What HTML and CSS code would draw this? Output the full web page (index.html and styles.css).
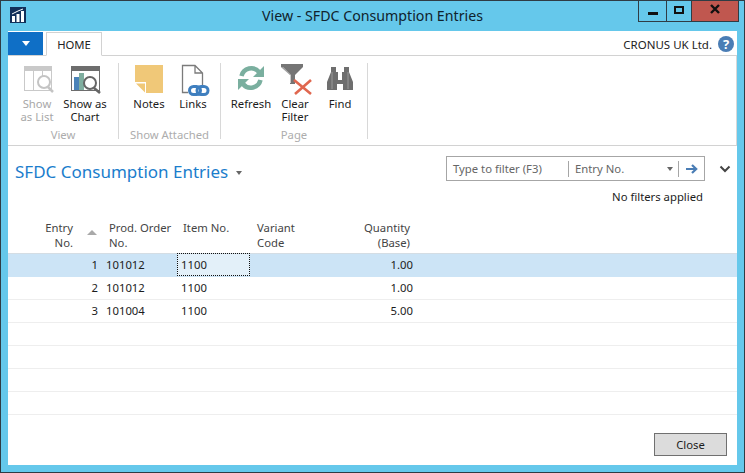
FILE: index.html
```html
<!DOCTYPE html>
<html lang="en">
<head>
    <meta charset="UTF-8">
    <title>View - SFDC Consumption Entries</title>
    <link rel="stylesheet" href="styles.css">
</head>
<body>

    <div class="window">
        <div class="titlebar">
            <div class="app-icon">
                <svg width="16" height="16" viewBox="0 0 16 16">
                    <rect width="16" height="16" fill="#12305a"/>
                    <path d="M2 9h3v6H2zM6.500 7h3v8h-3zM11 4h3v11h-3z" fill="#fff"/>
                    <path d="M2 7l6-3 5-2" stroke="#fff" stroke-width="1" fill="none"/>
                </svg>
            </div>
            <div class="window-title">View - SFDC Consumption Entries</div>
            <div class="window-controls">
                <div class="ctl ctl-min"><span class="min-glyph"></span></div>
                <div class="ctl ctl-max"><span class="max-glyph"></span></div>
                <div class="ctl ctl-close">
                    <svg width="10" height="10" viewBox="0 0 10 10"><path d="M1 1l8 8M9 1l-8 8" stroke="#111" stroke-width="2.400"/></svg>
                </div>
            </div>
        </div>

        <div class="content">
            <div class="tabbar">
                <div class="file-btn"><span class="file-arrow"></span></div>
                <div class="tab">HOME</div>
                <div class="company">CRONUS UK Ltd.</div>
                <div class="help">?</div>
            </div>

            <div class="ribbon">
                <div class="group group-view">
                    <div class="group-btns">
                        <div class="rbtn rbtn-list disabled">
                            <svg width="32" height="32" viewBox="0 0 32 32">
                                <rect x="3.500" y="3.500" width="27" height="24" fill="#fff" stroke="#c9c9c9"/>
                                <rect x="3" y="3" width="28" height="5" fill="#c9c9c9"/>
                                <path d="M12.500 8v20M21.500 8v10" stroke="#c9c9c9"/>
                                <circle cx="23" cy="19" r="6" fill="#fff" stroke="#c4c4c4" stroke-width="2"/>
                                <path d="M27 24l5 5" stroke="#c4c4c4" stroke-width="2.500"/>
                            </svg>
                            <span>Show<br>as List</span>
                        </div>
                        <div class="rbtn rbtn-chart">
                            <svg width="32" height="32" viewBox="0 0 32 32">
                                <rect x="2.500" y="3.500" width="28" height="24" fill="#fff" stroke="#6d6d6d"/>
                                <rect x="2" y="3" width="29" height="5" fill="#6d6d6d"/>
                                <rect x="5" y="14" width="5" height="13" fill="#4b83b8"/>
                                <rect x="10" y="10" width="5" height="17" fill="#7fae9f"/>
                                <circle cx="21" cy="20" r="6" fill="#fff" stroke="#666" stroke-width="2"/>
                                <path d="M25 25l6 5" stroke="#666" stroke-width="2.500"/>
                            </svg>
                            <span>Show as<br>Chart</span>
                        </div>
                    </div>
                    <div class="group-label">View</div>
                </div>

                <div class="group group-attached">
                    <div class="group-btns">
                        <div class="rbtn rbtn-notes">
                            <svg width="32" height="32" viewBox="0 0 32 32">
                                <path d="M2 2h28v28H13V19H2z" fill="#f0c878"/>
                                <path d="M3 20.500h9v9z" fill="#f0c878"/>
                            </svg>
                            <span>Notes</span>
                        </div>
                        <div class="rbtn rbtn-links">
                            <svg width="32" height="32" viewBox="0 0 32 32">
                                <path d="M11 29.500H5.500v-27H18l7.500 7.500v14M18 2.500V10h7.500" fill="none" stroke="#7b7b7b" stroke-width="1.300"/>
                                <rect x="12.500" y="23.500" width="11" height="8" rx="4" fill="none" stroke="#3f7fbf" stroke-width="3"/>
                                <rect x="20" y="23.500" width="11" height="8" rx="4" fill="none" stroke="#3f7fbf" stroke-width="3"/>
                            </svg>
                            <span>Links</span>
                        </div>
                    </div>
                    <div class="group-label">Show Attached</div>
                </div>

                <div class="group group-page">
                    <div class="group-btns">
                        <div class="rbtn rbtn-refresh">
                            <svg width="32" height="32" viewBox="0 0 32 32">
                                <path d="M6.500 13A10 10 0 0 1 24 9" fill="none" stroke="#7aaf9f" stroke-width="4.500"/>
                                <path d="M29 3v11H18z" fill="#7aaf9f"/>
                                <path d="M25.500 17A10 10 0 0 1 8 21" fill="none" stroke="#7aaf9f" stroke-width="4.500"/>
                                <path d="M3 27V16h11z" fill="#7aaf9f"/>
                            </svg>
                            <span>Refresh</span>
                        </div>
                        <div class="rbtn rbtn-clear">
                            <svg width="32" height="32" viewBox="0 0 32 32">
                                <path d="M2 1h22v3l-8 8v9h-5v-9L2 4z" fill="#757575"/>
                                <path d="M4 4l8 8v8h-1v-8L3 4z" fill="#c9c9c9"/>
                                <path d="M15 17l17 14M32 17L16 31" stroke="#e0674f" stroke-width="2.600"/>
                            </svg>
                            <span>Clear<br>Filter</span>
                        </div>
                        <div class="rbtn rbtn-find">
                            <svg width="32" height="32" viewBox="0 0 32 32">
                                <path d="M7 4h5v5h2v8h4V9h2V4h5v5l4 10v8H19v-6h-6v6H3v-8L7 9z" fill="#6e6e6e"/>
                                <path d="M8 9v17M24 9v17" stroke="#999" stroke-width="1"/>
                            </svg>
                            <span>Find</span>
                        </div>
                    </div>
                    <div class="group-label">Page</div>
                </div>
            </div>

            <div class="page-head">
                <div class="page-title">SFDC Consumption Entries <span class="title-arrow"></span></div>
                <div class="filter-area">
                    <div class="filter-row">
                        <div class="filter-box">
                            <div class="filter-input">Type to filter (F3)</div>
                            <div class="filter-field">Entry No. <span class="field-arrow"></span></div>
                            <div class="filter-go">
                                <svg width="12" height="10" viewBox="0 0 12 10"><path d="M0 5h10M6 1l4.200 4L6 9" fill="none" stroke="#4a7db5" stroke-width="2.200"/></svg>
                            </div>
                        </div>
                        <div class="chevron">
                            <svg width="12" height="8" viewBox="0 0 12 8"><path d="M1.500 1.500L6 6l4.500-4.500" fill="none" stroke="#444" stroke-width="2"/></svg>
                        </div>
                    </div>
                    <div class="filter-status">No filters applied</div>
                </div>
            </div>

            <table class="grid">
                <colgroup>
                    <col class="c-entry"><col class="c-order"><col class="c-item"><col class="c-variant"><col class="c-qty"><col>
                </colgroup>
                <thead>
                    <tr>
                        <th class="num entry-head">Entry<br>No.<span class="sort-arrow"></span></th>
                        <th>Prod. Order<br>No.</th>
                        <th>Item No.</th>
                        <th>Variant<br>Code</th>
                        <th class="num">Quantity<br>(Base)</th>
                        <th></th>
                    </tr>
                </thead>
                <tbody>
                    <tr class="selected"><td class="num">1</td><td>101012</td><td class="focus">1100</td><td></td><td class="num">1.00</td><td></td></tr>
                    <tr><td class="num">2</td><td>101012</td><td>1100</td><td></td><td class="num">1.00</td><td></td></tr>
                    <tr><td class="num">3</td><td>101004</td><td>1100</td><td></td><td class="num">5.00</td><td></td></tr>
                    <tr><td></td><td></td><td></td><td></td><td></td><td></td></tr>
                    <tr><td></td><td></td><td></td><td></td><td></td><td></td></tr>
                    <tr><td></td><td></td><td></td><td></td><td></td><td></td></tr>
                    <tr><td></td><td></td><td></td><td></td><td></td><td></td></tr>
                </tbody>
            </table>

            <div class="footer">
                <button class="close-btn">Close</button>
            </div>
        </div>
    </div>

</body>
</html>
```

FILE: styles.css
```css
* {
    box-sizing: border-box;
}

html, body {
    margin: 0;
    height: 100%;
    overflow: hidden;
}

body {
    font-family: "Noto Sans", "Open Sans", sans-serif;
    font-size: 11.3px;
    color: #1c1c1c;
}

.window {
    width: 745px;
    height: 473px;
    background-color: #65c8eb;
    border: 1px solid #2f3c44;
    padding: 0 7px 7px;
    display: flex;
    flex-direction: column;
}

/* title bar */
.titlebar {
    height: 30px;
    flex: none;
    display: grid;
    grid-template-columns: 1fr auto 1fr;
    align-items: start;
}

.app-icon {
    margin: 6px 0 0 2px;
    height: 16px;
}

.window-title {
    font-size: 14.2px;
    line-height: 30px;
    color: #10222c;
}

.window-controls {
    justify-self: end;
    display: flex;
    height: 21px;
    margin-right: -2px;
    border: 1px solid #2f3c44;
    border-top: none;
}

.ctl {
    height: 100%;
    display: flex;
    align-items: center;
    justify-content: center;
}

.ctl-min {
    width: 28px;
    border-right: 1px solid #2f3c44;
}

.ctl-max {
    width: 25px;
    border-right: 1px solid #2f3c44;
}

.ctl-close {
    width: 46px;
    background-color: #c0574f;
}

.min-glyph {
    width: 10px;
    height: 3px;
    margin-top: 5px;
    background-color: #111;
}

.max-glyph {
    width: 10px;
    height: 8px;
    margin-top: -3px;
    border: 2px solid #111;
}

.ctl-close svg {
    margin-top: -4px;
}

/* main white area */
.content {
    flex: 1;
    background-color: #fff;
    display: flex;
    flex-direction: column;
    min-height: 0;
}

.tabbar {
    height: 25px;
    flex: none;
    display: flex;
    align-items: flex-end;
    border-bottom: 1px solid #d2d2d2;
}

.file-btn {
    width: 35px;
    height: 23px;
    background-color: #0f6fc6;
    display: flex;
    align-items: center;
    justify-content: center;
    align-self: flex-start;
    margin-top: 1px;
}

.file-arrow {
    border-left: 4.500px solid transparent;
    border-right: 4.500px solid transparent;
    border-top: 5px solid #fff;
}

.tab {
    width: 56px;
    height: 24px;
    margin-left: 3px;
    margin-bottom: -1px;
    border: 1px solid #d2d2d2;
    border-bottom: 1px solid #fff;
    text-align: center;
    line-height: 24px;
    color: #222;
}

.company {
    margin-left: auto;
    align-self: center;
    margin-top: 3px;
    font-size: 11.5px;
    color: #222;
}

.help {
    width: 16px;
    height: 16px;
    border-radius: 50%;
    background-color: #4a7db5;
    color: #fff;
    font-weight: bold;
    font-size: 13px;
    line-height: 16px;
    text-align: center;
    margin: 0 3px 0 6px;
    align-self: center;
    position: relative;
    top: 1px;
}

/* ribbon */
.ribbon {
    height: 90px;
    flex: none;
    display: flex;
    border-bottom: 1px solid #d2d2d2;
    border-right: 1px solid #d8d8d8;
    padding-top: 7px;
}

.group {
    display: flex;
    flex-direction: column;
    align-items: center;
    height: 76px;
    border-right: 1px solid #d8d8d8;
}

.group-view {
    width: 111px;
}

.group-attached {
    width: 102px;
}

.group-page {
    width: 147px;
}

.group-btns {
    display: flex;
    flex: 1;
    align-self: flex-start;
    margin-left: 8px;
}

.group-view .group-btns {
    margin-left: 6px;
}

.rbtn {
    width: 44px;
    display: flex;
    flex-direction: column;
    align-items: center;
    text-align: center;
    line-height: 13px;
    white-space: nowrap;
}

.rbtn svg {
    display: block;
    overflow: visible;
    margin-bottom: 2px;
    flex: none;
}

.rbtn-list {
    width: 46px;
}

.rbtn-chart {
    width: 50px;
}

.rbtn-find {
    width: 46px;
}

.disabled {
    color: #a8a8a8;
}

.group-label {
    color: #adadad;
    line-height: 13px;
    margin-bottom: -2px;
}

/* heading and filter */
.page-head {
    height: 74px;
    flex: none;
    display: flex;
    justify-content: space-between;
}

.page-title {
    margin: 14px 0 0 7px;
    font-size: 17px;
    line-height: 24px;
    color: #1a7dcc;
}

.title-arrow {
    display: inline-block;
    margin: 0 0 3px 3px;
    border-left: 3.500px solid transparent;
    border-right: 3.500px solid transparent;
    border-top: 4px solid #666;
}

.filter-area {
    margin-top: 10px;
    margin-right: 6px;
}

.filter-row {
    display: flex;
    align-items: center;
}

.filter-box {
    width: 259px;
    height: 25px;
    border: 1px solid #a6a6a6;
    display: flex;
    align-items: center;
    color: #666;
}

.filter-input {
    width: 122px;
    padding-left: 6px;
    border-right: 1px solid #a6a6a6;
    line-height: 16px;
}

.filter-field {
    width: 110px;
    padding: 0 5px 0 6px;
    border-right: 1px solid #a6a6a6;
    line-height: 16px;
    display: flex;
    justify-content: space-between;
    align-items: center;
}

.field-arrow {
    border-left: 3.500px solid transparent;
    border-right: 3.500px solid transparent;
    border-top: 4px solid #666;
}

.filter-go {
    flex: 1;
    display: flex;
    align-items: center;
    justify-content: center;
}

.chevron {
    width: 26px;
    display: flex;
    justify-content: flex-end;
}

.filter-status {
    width: 257px;
    margin-top: 8px;
    text-align: right;
    line-height: 16px;
}

/* list */
.grid {
    width: 100%;
    table-layout: fixed;
    border-collapse: collapse;
    flex: none;
}

.c-entry { width: 91px; }
.c-order { width: 78px; }
.c-item { width: 73px; }
.c-variant { width: 80px; }
.c-qty { width: 86px; }

.grid th {
    height: 33px;
    padding: 0 0 2px 6px;
    font-weight: normal;
    text-align: left;
    vertical-align: top;
    line-height: 15px;
    color: #444;
    border-bottom: 1px solid #d4dde4;
}

.grid th:nth-child(2) { padding-left: 10px; }
.grid th:nth-child(4) { padding-left: 7px; }

.grid th.num {
    text-align: right;
    padding-right: 6px;
}

.grid th.entry-head {
    padding-right: 26px;
    position: relative;
}

.sort-arrow {
    position: absolute;
    left: 79px;
    top: 10px;
    border-left: 5px solid transparent;
    border-right: 5px solid transparent;
    border-bottom: 5px solid #a9a9a9;
}

.grid td {
    height: 23px;
    padding: 0 0 0 4px;
    border-bottom: 1px solid #eeeeee;
    line-height: 16px;
    white-space: nowrap;
}

.grid td:nth-child(2) { padding-left: 7px; }

.grid td.num {
    text-align: right;
    padding-right: 3px;
}

.grid td:first-child.num { padding-right: 1px; }

.selected td {
    background-color: #cce4f6;
    border-bottom-color: #cce4f6;
}

.grid td.focus {
    background-color: #e3f0f9;
    outline: 1px dotted #111;
    outline-offset: -1px;
}

/* bottom */
.footer {
    flex: 1;
    display: flex;
    justify-content: flex-end;
    align-items: flex-start;
    padding: 18px 10px 0 0;
}

.close-btn {
    width: 73px;
    height: 23px;
    font: inherit;
    color: #1c1c1c;
    background-color: #dcdcdc;
    border: 1px solid #707070;
    padding: 0;
}
```
